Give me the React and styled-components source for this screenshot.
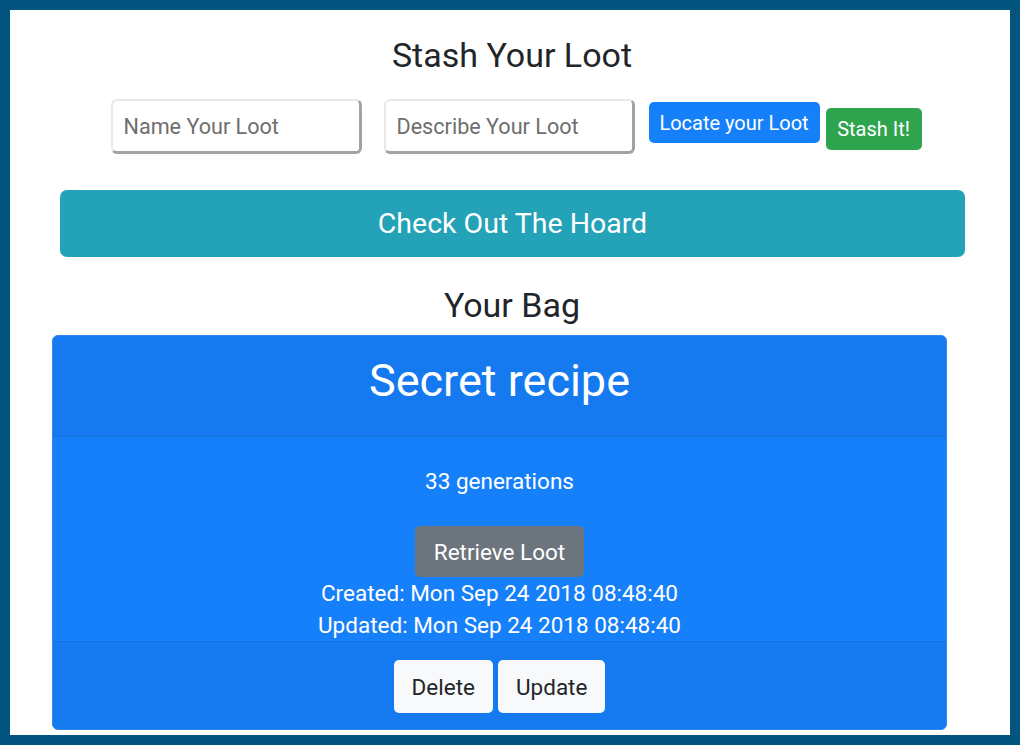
import React from 'react';
import styled, {createGlobalStyle} from 'styled-components';

const GlobalStyle = createGlobalStyle`
    html, body {
        margin: 0;
        padding: 0;
        background: #03557f;
    }
    * {
        box-sizing: border-box;
    }
`

const Frame = styled.div`
    width: 1020px;
    height: 745px;
    border: 10px solid #03557f;
    background: #ffffff;
    padding-left: 4px;
    font-family: Roboto, "Liberation Sans", sans-serif;
    color: #212529;
    overflow: hidden;
`

const Heading = styled.h3`
    margin: ${props => props.top}px 0 0;
    font-size: 34px;
    font-weight: 400;
    line-height: 40px;
    text-align: center;
`

const FormRow = styled.form`
    display: flex;
    justify-content: center;
    align-items: flex-start;
    margin-top: 24px;
    padding-left: 8px;
    height: 55px;
`

const LootInput = styled.input`
    width: 251px;
    height: 55px;
    margin-right: ${props => props.gap}px;
    padding: 0 0 0 11px;
    border: 2px solid #e8e8e8;
    border-right: 3px solid #a3a3a3;
    border-bottom: 3px solid #a3a3a3;
    border-radius: 6px;
    font-family: inherit;
    font-size: 21.6px;
    color: #495057;
    background: #fff;
    &::placeholder {
        color: #6e6e6e;
    }
`

const SmallButton = styled.button`
    width: ${props => props.w}px;
    height: ${props => props.h}px;
    margin-top: ${props => props.top}px;
    margin-left: ${props => props.left}px;
    padding: 0;
    border: none;
    border-radius: 5px;
    background: ${props => props.bg};
    color: #fff;
    font-family: inherit;
    font-size: 20px;
    line-height: 1;
    white-space: nowrap;
`

const HoardButton = styled.button`
    display: block;
    width: 905px;
    height: 67px;
    margin: 36px 0 0 46px;
    border: none;
    border-radius: 7px;
    background: #24a2b8;
    color: #fff;
    font-family: inherit;
    font-size: 28.5px;
`

const Card = styled.div`
    display: flex;
    flex-direction: column;
    width: 895px;
    height: 395px;
    margin: 10px 0 0 38px;
    border: 1px solid #3289ee;
    border-radius: 6px;
    background: #1680fa;
    color: #fff;
    overflow: hidden;
    text-align: center;
`

const CardHeader = styled.div`
    height: 101px;
    flex-shrink: 0;
    display: flex;
    align-items: center;
    justify-content: center;
    background: #157aef;
    border-bottom: 1px solid #1470dc;
    font-size: 45px;
    padding-bottom: 12px;
`

const CardBody = styled.div`
    flex: 1;
    display: flex;
    flex-direction: column;
    align-items: center;
    padding-top: 28px;
    font-size: 22.5px;
    line-height: 32px;
    .count {
        margin: 0 0 28px;
        line-height: 33px;
    }
`

const CardButton = styled.button`
    height: ${props => props.h}px;
    padding: 0 ${props => props.px}px;
    border: none;
    border-radius: 5px;
    background: ${props => props.bg};
    color: ${props => props.fg};
    font-family: inherit;
    font-size: 22.5px;
`

const CardFooter = styled.div`
    height: 89px;
    flex-shrink: 0;
    display: flex;
    justify-content: center;
    align-items: flex-start;
    gap: 5px;
    padding-top: 18px;
    background: #157aef;
    border-top: 1px solid #1470dc;
`

const App = () => (
    <Frame>
        <GlobalStyle />
        <Heading top={25}>Stash Your Loot</Heading>
        <FormRow onSubmit={e => e.preventDefault()}>
            <LootInput gap={22} placeholder='Name Your Loot' type='text' />
            <LootInput gap={0} placeholder='Describe Your Loot' type='text' />
            <SmallButton type='button' w={171} h={41} top={3} left={14} bg='#1680fa'>Locate your Loot</SmallButton>
            <SmallButton type='submit' w={96} h={42} top={9} left={6} bg='#2ea44f'>Stash It!</SmallButton>
        </FormRow>
        <HoardButton>Check Out The Hoard</HoardButton>
        <Heading top={28}>Your Bag</Heading>
        <Card>
            <CardHeader>Secret recipe</CardHeader>
            <CardBody>
                <p className='count'>33 generations</p>
                <CardButton h={51} px={19} bg='#6c757d' fg='#fff'>Retrieve Loot</CardButton>
                <div>Created: Mon Sep 24 2018 08:48:40</div>
                <div>Updated: Mon Sep 24 2018 08:48:40</div>
            </CardBody>
            <CardFooter>
                <CardButton h={53} px={18} bg='#f8f9fa' fg='#212529'>Delete</CardButton>
                <CardButton h={53} px={18} bg='#f8f9fa' fg='#212529'>Update</CardButton>
            </CardFooter>
        </Card>
    </Frame>
);

export default App;
